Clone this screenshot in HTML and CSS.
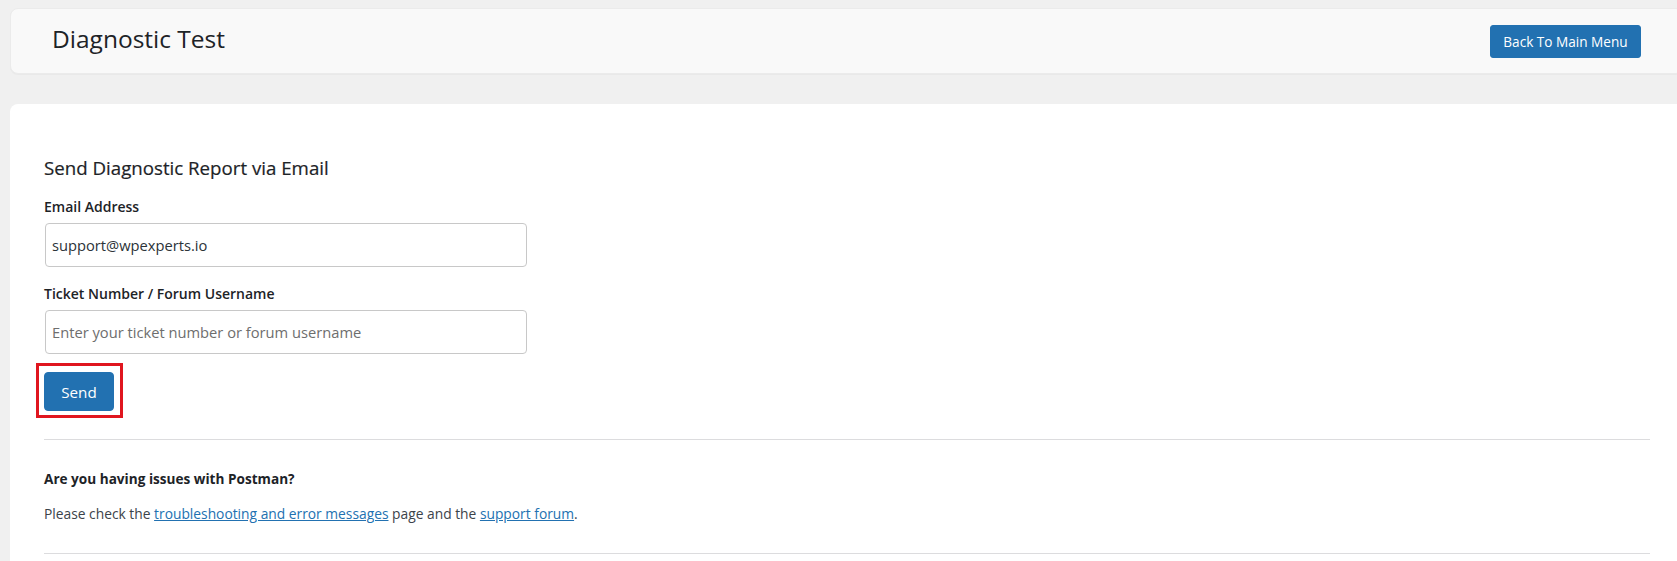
FILE: index.html
```html
<!DOCTYPE html>
<html lang="en">
<head>
<meta charset="utf-8">
<title>Diagnostic Test</title>
<link rel="stylesheet" href="styles.css">
</head>
<body>
<div class="page">
  <header class="topbar">
    <h1 class="title">Diagnostic Test</h1>
    <a class="btn btn-top" href="#">Back To Main Menu</a>
  </header>
  <main class="panel">
    <h2 class="heading">Send Diagnostic Report via Email</h2>
    <form class="form">
      <label class="label" for="email">Email Address</label>
      <input class="input" id="email" type="text" value="support@wpexperts.io">
      <label class="label label-second" for="ticket">Ticket Number / Forum Username</label>
      <input class="input" id="ticket" type="text" placeholder="Enter your ticket number or forum username">
      <div class="send-wrap">
        <button class="btn btn-send" type="button">Send</button>
        <span class="highlight"></span>
      </div>
    </form>
    <hr class="rule rule-first">
    <p class="issue-title">Are you having issues with Postman?</p>
    <p class="issue-text">Please check the <a href="#">troubleshooting and error messages</a> page and the <a href="#">support forum</a>.</p>
    <hr class="rule rule-last">
  </main>
</div>
</body>
</html>
```

FILE: styles.css
```css
html, body {
  margin: 0;
  padding: 0;
  overflow: hidden;
  background: #f0f0f0;
}
body {
  font-family: "Open Sans", "Noto Sans", sans-serif;
  color: #1d2327;
}
.page {
  width: 1674px;
  padding: 8px 0 0 10px;
}
.topbar {
  height: 66px;
  box-sizing: border-box;
  background: #f9f9f9;
  border: 1px solid #ebebeb;
  border-radius: 8px;
  box-shadow: 0 1px 1px rgba(0,0,0,0.03);
  display: flex;
  align-items: center;
  justify-content: space-between;
  padding: 0 42px 0 41px;
}
.title {
  margin: 0 0 4px 0;
  font-size: 24.5px;
  line-height: 32px;
  font-weight: 400;
  color: #1d2327;
}
.btn {
  display: inline-flex;
  align-items: center;
  justify-content: center;
  background: #2271b1;
  color: #fff;
  border: 1px solid #2271b1;
  border-radius: 3px;
  text-decoration: none;
  font-family: inherit;
  box-sizing: border-box;
}
.btn-top {
  height: 33px;
  width: 151px;
  font-size: 13.6px;
  margin-top: 1px;
}
.panel {
  margin-top: 30px;
  background: #fff;
  border-radius: 8px;
  padding: 52px 34px 30px 34px;
  display: flex;
  flex-direction: column;
  align-items: flex-start;
}
.heading {
  margin: 0;
  font-size: 18.7px;
  line-height: 24px;
  font-weight: 400;
  color: #1d2327;
  -webkit-text-stroke: 0.2px #1d2327;
}
.form {
  display: flex;
  flex-direction: column;
  align-items: flex-start;
  margin-top: 17px;
}
.label {
  font-size: 14px;
  line-height: 20px;
  font-weight: 600;
  color: #1d2327;
  margin-bottom: 6px;
}
.label-second {
  margin-top: 17px;
}
.input {
  width: 482px;
  height: 44px;
  box-sizing: border-box;
  margin: 0 0 0 1px;
  border: 1px solid #c8c8c8;
  border-radius: 4px;
  padding: 0 6px;
  font-family: inherit;
  font-size: 14.7px;
  color: #2c3338;
  background: #fff;
  outline: none;
}
.input::placeholder {
  color: #6e6e6e;
}
.send-wrap {
  position: relative;
  margin-top: 18px;
}
.btn-send {
  width: 70px;
  height: 39px;
  border-radius: 4px;
  font-size: 15.2px;
  padding: 0;
}
.highlight {
  position: absolute;
  top: -9px;
  left: -8px;
  right: -9px;
  bottom: -7px;
  border: 3px solid #e0161f;
  pointer-events: none;
}
.rule {
  align-self: stretch;
  border: 0;
  height: 1px;
  background: #dcdcde;
  margin: 0;
}
.rule-first {
  margin-top: 28px;
}
.issue-title {
  margin: 29px 0 0 0;
  font-size: 13.6px;
  line-height: 20px;
  font-weight: 700;
  color: #1d2327;
}
.issue-text {
  margin: 15px 0 0 0;
  font-size: 13.8px;
  line-height: 20px;
  color: #3c434a;
}
.issue-text a {
  color: #2271b1;
  text-decoration: underline;
}
.rule-last {
  margin-top: 29px;
}
```
